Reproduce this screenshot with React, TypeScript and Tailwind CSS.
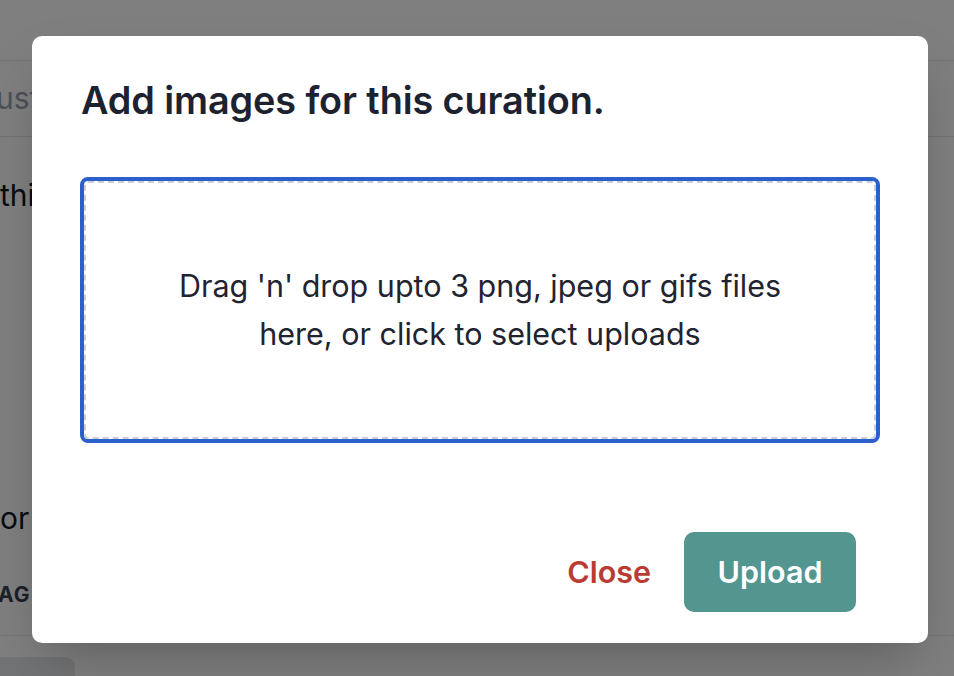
import React from "react";

export default function App() {
  return (
    <div className="relative w-[954px] h-[676px] overflow-hidden bg-white font-['Inter',sans-serif]">
      {/* background page */}
      <div className="flex flex-col">
        <div className="h-[60px]" />
        <div className="h-[77px] border-y border-gray-200 flex items-center -ml-[4px]">
          <span className="text-[30px] text-gray-400">ust</span>
        </div>
        <div className="pt-[38px] text-[30px] text-gray-900 leading-[40px]">this</div>
        <div className="pt-[283px] text-[30px] text-gray-900 leading-[40px]">or</div>
        <div className="pt-[43px] -ml-[2px] text-[21px] font-bold tracking-wider text-gray-700 leading-[28px]">AG</div>
        <div className="mt-[26px] border-t border-gray-200" />
        <div className="mt-[21px] w-[75px] h-[40px] rounded-tr-[10px] bg-gray-200" />
      </div>

      {/* overlay */}
      <div className="absolute inset-0 bg-black/50" />

      {/* modal */}
      <div className="absolute inset-0 flex justify-center pt-[36px] pl-[6px]">
        <div className="w-[896px] h-[607px] bg-white rounded-[10px] shadow-2xl px-[48px] pt-[41px] flex flex-col">
          <h2 className="text-[37.8px] font-semibold text-[#1d2230] leading-[46px] pl-[1px] tracking-[-0.1px]">Add images for this curation.</h2>
          <div className="mt-[54px] h-[266px] rounded-[8px] border-[4px] border-[#2a5fcc]">
            <div className="h-full rounded-[4px] border-2 border-dashed border-[#c9cfd8] flex items-center justify-center text-center">
              <p className="text-[30.5px] leading-[48px] text-[#1f2430]">
                Drag 'n' drop upto 3 png, jpeg or gifs files
                <br />
                here, or click to select uploads
              </p>
            </div>
          </div>
          <div className="mt-[89px] flex justify-end items-center gap-[33px] pr-[24px]">
            <button className="text-[30.5px] font-semibold text-[#b93b33]">Close</button>
            <button className="w-[172px] h-[80px] rounded-[10px] bg-[#52968f] text-white text-[30.5px] font-semibold">Upload</button>
          </div>
        </div>
      </div>
    </div>
  );
}
